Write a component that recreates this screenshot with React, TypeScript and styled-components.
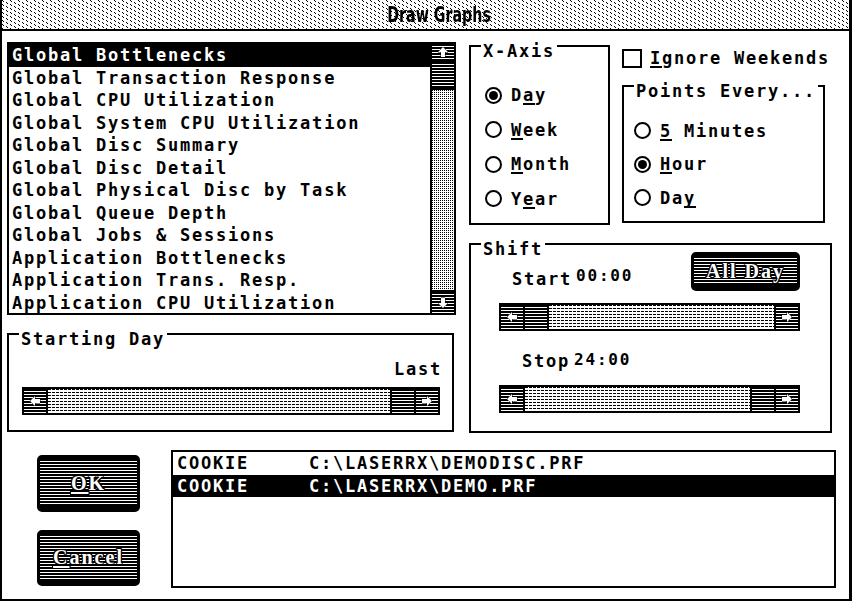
import React from "react";
import styled, { createGlobalStyle, css } from "styled-components";

const UI_FONT = `"DejaVu Sans Mono", "Liberation Mono", monospace`;

const GlobalStyle = createGlobalStyle`
  html, body {
    margin: 0;
    padding: 0;
    background: #fff;
  }
  * {
    box-sizing: border-box;
  }
`;

// one black pixel in the top-left corner of every tile
const dot = "conic-gradient(from 270deg at 1px 1px, #000 25%, transparent 0)";

const stripes = css`
  background-color: #000;
  background-image: repeating-linear-gradient(to bottom, #000 0 2px, #fff 2px 3px);
`;

const sysText = css`
  font-family: ${UI_FONT};
  font-weight: bold;
  font-size: 17px;
  letter-spacing: 1.77px;
  line-height: 20px;
`;

const graphs = [
  "Global Bottlenecks",
  "Global Transaction Response",
  "Global CPU Utilization",
  "Global System CPU Utilization",
  "Global Disc Summary",
  "Global Disc Detail",
  "Global Physical Disc by Task",
  "Global Queue Depth",
  "Global Jobs & Sessions",
  "Application Bottlenecks",
  "Application Trans. Resp.",
  "Application CPU Utilization",
];

const files = [
  { node: "COOKIE", path: "C:\\LASERRX\\DEMODISC.PRF", selected: false },
  { node: "COOKIE", path: "C:\\LASERRX\\DEMO.PRF", selected: true },
];

const xAxis = [
  { label: "Day", key: 1, checked: true },
  { label: "Week", key: 0, checked: false },
  { label: "Month", key: 0, checked: false },
  { label: "Year", key: 1, checked: false },
];

const points = [
  { label: "5 Minutes", key: 0, checked: false },
  { label: "Hour", key: 0, checked: true },
  { label: "Day", key: 2, checked: false },
];

const Key = styled.u`
  text-decoration-thickness: 2px;
  text-underline-offset: 2px;
  text-decoration-skip-ink: none;
`;

const Mnemonic = ({ text, at }: { text: string; at: number }) => (
  <>
    {text.slice(0, at)}
    <Key>{text[at]}</Key>
    {text.slice(at + 1)}
  </>
);

const ArrowSvg = styled.svg<{ $rot: number }>`
  display: block;
  transform: rotate(${(p) => p.$rot}deg);
`;

const Arrow = ({ dir }: { dir: "up" | "down" | "left" | "right" }) => {
  const rot = { up: 0, right: 90, down: 180, left: 270 }[dir];
  return (
    <ArrowSvg $rot={rot} width="12" height="12" viewBox="0 0 12 12">
      <polygon
        points="6,1 11,6 8,6 8,11 4,11 4,6 1,6"
        fill="#fff"
        stroke="#000"
        strokeWidth="1"
        paintOrder="stroke"
      />
    </ArrowSvg>
  );
};

const Window = styled.div`
  width: 852px;
  height: 601px;
  display: flex;
  flex-direction: column;
  border: solid #000;
  border-width: 0 3px 2px 2px;
  background: #fff;
  color: #000;
  overflow: hidden;
  ${sysText}
`;

const TitleBar = styled.div`
  flex: none;
  height: 31px;
  padding-left: 28px;
  border-bottom: 2px solid #000;
  display: flex;
  align-items: center;
  justify-content: center;
  background-color: #fff;
  background-image: ${dot}, ${dot}, ${dot}, ${dot};
  background-size: 8px 4px;
  background-position: 0 0, 1px 1px, 4px 2px, 5px 3px;
`;

const Title = styled.h1`
  margin: 0;
  font: bold 22px/22px "DejaVu Sans Condensed", "DejaVu Sans", sans-serif;
  letter-spacing: 0;
  transform: scaleX(0.72);
`;

const TopArea = styled.div`
  flex: none;
  display: flex;
  height: 402px;
  padding-left: 5px;
`;

const LeftColumn = styled.div`
  width: 449px;
  display: flex;
  flex-direction: column;
`;

const RightColumn = styled.div`
  margin-left: 13px;
  display: flex;
  flex-direction: column;
`;

const OptionsRow = styled.div`
  display: flex;
  margin-top: 14px;
`;

const SideStack = styled.div`
  margin-left: 12px;
  display: flex;
  flex-direction: column;
`;

const ListBox = styled.div`
  display: flex;
  height: 273px;
  margin-top: 11px;
  border: 2px solid #000;
`;

const ListItems = styled.div`
  flex: 1;
  overflow: hidden;
`;

const ListItem = styled.div<{ $selected?: boolean }>`
  height: 22.5px;
  line-height: 22.5px;
  padding-left: 3px;
  white-space: pre;
  background: ${(p) => (p.$selected ? "#000" : "#fff")};
  color: ${(p) => (p.$selected ? "#fff" : "#000")};
`;

const VScroll = styled.div`
  flex: none;
  width: 24px;
  display: flex;
  flex-direction: column;
  gap: 2px;
  border-left: 2px solid #000;
  background: #000;
`;

const ScrollPart = styled.div<{ $h: number }>`
  flex: none;
  height: ${(p) => p.$h}px;
  display: flex;
  align-items: center;
  justify-content: center;
  ${stripes}
`;

const ScrollTrack = styled.div`
  flex: 1;
  background-color: #fff;
  background-image: repeating-linear-gradient(to bottom, transparent 0 1px, #fff 1px 2px),
    repeating-linear-gradient(to right, #000 0 1px, #fff 1px 2px);
`;

const Group = styled.div<{ $w: number; $h: number; $mt?: number }>`
  position: relative;
  flex: none;
  width: ${(p) => p.$w}px;
  height: ${(p) => p.$h}px;
  margin-top: ${(p) => p.$mt ?? 0}px;
  border: 2px solid #000;
`;

const Legend = styled.span`
  position: absolute;
  top: -6px;
  left: 10px;
  padding: 0 2px;
  background: #fff;
  white-space: pre;
`;

const RadioList = styled.div<{ $pt: number; $pl: number; $gap: number }>`
  display: flex;
  flex-direction: column;
  gap: ${(p) => p.$gap}px;
  padding: ${(p) => p.$pt}px 0 0 ${(p) => p.$pl}px;
`;

const OptionRow = styled.div`
  display: flex;
  align-items: center;
  gap: 9px;
  height: 20px;
  white-space: pre;
`;

const Radio = styled.span<{ $on?: boolean }>`
  position: relative;
  flex: none;
  width: 17px;
  height: 17px;
  border: 2px solid #000;
  border-radius: 50%;
  background: #fff;
  ${(p) =>
    p.$on &&
    css`
      &::after {
        content: "";
        position: absolute;
        inset: 2px;
        border-radius: 50%;
        background: #000;
      }
    `}
`;

const CheckRow = styled(OptionRow)`
  margin-top: 3px;
  gap: 8px;
`;

const CheckBox = styled.span`
  flex: none;
  width: 20px;
  height: 19px;
  border: 2px solid #000;
  background: #fff;
`;

const SliderFrame = styled.div<{ $w: number }>`
  flex: none;
  display: flex;
  gap: 2px;
  width: ${(p) => p.$w}px;
  height: 28px;
  border: 2px solid #000;
  background: #000;
`;

const SliderKnob = styled.div`
  flex: none;
  width: 22px;
  display: flex;
  align-items: center;
  justify-content: center;
  ${stripes}
`;

const SliderTrack = styled.div<{ $grow: number }>`
  flex: ${(p) => p.$grow} 1 0;
  min-width: 0;
  background-color: #fff;
  background-image: repeating-linear-gradient(to right, transparent 0 3px, #fff 3px 4px),
    repeating-linear-gradient(to bottom, #000 0 1px, #fff 1px 3px);
`;

const Slider = ({ width, value }: { width: number; value: number }) => (
  <SliderFrame $w={width}>
    <SliderKnob>
      <Arrow dir="left" />
    </SliderKnob>
    {value > 0 && <SliderTrack $grow={value} />}
    <SliderKnob />
    {value < 1 && <SliderTrack $grow={1 - value} />}
    <SliderKnob>
      <Arrow dir="right" />
    </SliderKnob>
  </SliderFrame>
);

const DayBody = styled.div`
  display: flex;
  flex-direction: column;
  padding: 24px 12px 0 13px;
`;

const LastLabel = styled.div`
  text-align: right;
  margin-right: -2px;
  margin-bottom: 8px;
`;

const ShiftBody = styled.div`
  display: flex;
  flex-direction: column;
  padding: 7px 0 0 28px;
`;

const ValueRow = styled.div<{ $mt?: number }>`
  display: flex;
  align-items: flex-end;
  width: 301px;
  margin-top: ${(p) => p.$mt ?? 0}px;
`;

const FieldLabel = styled.span<{ $indent: number }>`
  margin-left: ${(p) => p.$indent}px;
  margin-bottom: 2px;
`;

const TimeValue = styled.span<{ $raise: number }>`
  margin: 0 0 ${(p) => p.$raise}px 4px;
  font-size: 16px;
  letter-spacing: 1.8px;
`;

const PushButton = styled.button<{ $w: number; $h: number }>`
  flex: none;
  width: ${(p) => p.$w}px;
  height: ${(p) => p.$h}px;
  margin-left: auto;
  padding: 0;
  border: solid #000;
  border-width: 4px 3px 6px;
  border-radius: 5px;
  ${stripes}
  display: flex;
  align-items: center;
  justify-content: center;
  font: bold 20px/1 "Liberation Serif", serif;
  letter-spacing: 2px;
  color: #fff;
  text-shadow: 1px 0 #000, -1px 0 #000, 0 1px #000, 0 -1px #000, 1px 1px #000, -1px -1px #000,
    1px -1px #000, -1px 1px #000;
  cursor: default;
`;

const BottomArea = styled.div`
  display: flex;
  margin-top: 17px;
`;

const ButtonColumn = styled.div`
  display: flex;
  flex-direction: column;
  gap: 18px;
  margin-left: 35px;
  padding-top: 5px;
`;

const FileList = styled.div`
  width: 665px;
  height: 138px;
  margin-left: 31px;
  border: 2px solid #000;
`;

const FileRow = styled(ListItem)`
  padding-left: 4px;
`;

const App: React.FC = () => {
  return (
    <>
      <GlobalStyle />
      <Window>
        <TitleBar>
          <Title>Draw Graphs</Title>
        </TitleBar>

        <TopArea>
          <LeftColumn>
            <ListBox>
              <ListItems>
                {graphs.map((g, i) => (
                  <ListItem key={g} $selected={i === 0}>
                    {g}
                  </ListItem>
                ))}
              </ListItems>
              <VScroll>
                <ScrollPart $h={16}>
                  <Arrow dir="up" />
                </ScrollPart>
                <ScrollPart $h={26} />
                <ScrollTrack />
                <ScrollPart $h={21}>
                  <Arrow dir="down" />
                </ScrollPart>
              </VScroll>
            </ListBox>

            <Group $w={447} $h={99} $mt={18}>
              <Legend>Starting Day</Legend>
              <DayBody>
                <LastLabel>Last</LastLabel>
                <Slider width={418} value={1} />
              </DayBody>
            </Group>
          </LeftColumn>

          <RightColumn>
            <OptionsRow>
              <Group $w={141} $h={180}>
                <Legend>X-Axis</Legend>
                <RadioList $pt={38} $pl={14} $gap={14.5}>
                  {xAxis.map((o) => (
                    <OptionRow key={o.label}>
                      <Radio $on={o.checked} />
                      <span>
                        <Mnemonic text={o.label} at={o.key} />
                      </span>
                    </OptionRow>
                  ))}
                </RadioList>
              </Group>

              <SideStack>
                <CheckRow>
                  <CheckBox />
                  <span>
                    <Mnemonic text="Ignore Weekends" at={0} />
                  </span>
                </CheckRow>
                <Group $w={203} $h={138} $mt={17}>
                  <Legend>Points Every...</Legend>
                  <RadioList $pt={33.5} $pl={10} $gap={13.5}>
                    {points.map((o) => (
                      <OptionRow key={o.label}>
                        <Radio $on={o.checked} />
                        <span>
                          <Mnemonic text={o.label} at={o.key} />
                        </span>
                      </OptionRow>
                    ))}
                  </RadioList>
                </Group>
              </SideStack>
            </OptionsRow>

            <Group $w={363} $h={190} $mt={18}>
              <Legend>Shift</Legend>
              <ShiftBody>
                <ValueRow>
                  <FieldLabel $indent={13}>Start</FieldLabel>
                  <TimeValue $raise={5}>00:00</TimeValue>
                  <PushButton $w={109} $h={39}>
                    All Day
                  </PushButton>
                </ValueRow>
                <ValueRow $mt={12}>
                  <Slider width={301} value={0} />
                </ValueRow>
                <ValueRow $mt={19}>
                  <FieldLabel $indent={23}>Stop</FieldLabel>
                  <TimeValue $raise={3}>24:00</TimeValue>
                </ValueRow>
                <ValueRow $mt={12}>
                  <Slider width={301} value={1} />
                </ValueRow>
              </ShiftBody>
            </Group>
          </RightColumn>
        </TopArea>

        <BottomArea>
          <ButtonColumn>
            <PushButton $w={103} $h={57}>
              <Mnemonic text="OK" at={0} />
            </PushButton>
            <PushButton $w={103} $h={56}>
              <Mnemonic text="Cancel" at={0} />
            </PushButton>
          </ButtonColumn>
          <FileList>
            {files.map((f) => (
              <FileRow key={f.path} $selected={f.selected}>
                {f.node.padEnd(11) + f.path}
              </FileRow>
            ))}
          </FileList>
        </BottomArea>
      </Window>
    </>
  );
};

export default App;
